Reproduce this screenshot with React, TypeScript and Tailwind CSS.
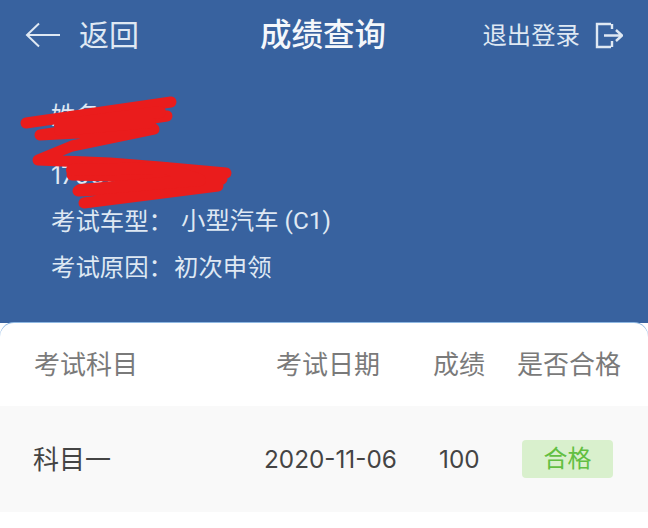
export default function App() {
  return (
    <div className="relative w-[648px] h-[528px] overflow-hidden bg-white font-['Inter','Noto_Sans_CJK_SC',sans-serif]">
      <div className="h-[323px] bg-[#38629f] text-[#dfe8f3]">
        <header className="h-[70px] flex items-center justify-between pl-[25px] pr-[25px]">
          <div className="w-[200px] flex items-center gap-[19px]">
            <svg width="35" height="26" viewBox="0 0 35 26" fill="none" stroke="#dfe8f3" strokeWidth="2">
              <path d="M35 13H2M14 1.5 2 13l12 11.5" />
            </svg>
            <span className="text-[30px] leading-[40px]">返回</span>
          </div>
          <h1 className="text-[31.5px] leading-[40px] font-medium text-[#f4f7fb] -translate-x-px">成绩查询</h1>
          <div className="w-[200px] flex items-center justify-end gap-[15px]">
            <span className="text-[24.4px] leading-[36px]">退出登录</span>
            <svg width="28" height="27" viewBox="0 0 28 27" fill="none" stroke="#dfe8f3" strokeWidth="2.4">
              <path d="M16 2H2v23h14M17 7v-5M17 25v-6M9 13.5h17M21 8l6 5.5-6 5.5" />
            </svg>
          </div>
        </header>
        <div className="pl-[51px] pt-[27px] text-[24.4px] flex flex-col">
          <div className="h-[36px] leading-[36px]">姓名：</div>
          <div className="h-[36px] mt-[24px] leading-[36px]">170000000</div>
          <div className="h-[36px] mt-[10px] leading-[36px] flex">
            <span className="w-[130px]">考试车型：</span>
            <span className="font-['Roboto','Noto_Sans_CJK_SC',sans-serif]">小型汽车 (C1)</span>
          </div>
          <div className="h-[36px] mt-[10px] leading-[36px] flex">
            <span className="w-[123px]">考试原因：</span>
            <span>初次申领</span>
          </div>
        </div>
      </div>

      <svg className="absolute left-0 top-0 pointer-events-none" width="648" height="528" fill="none" stroke="#ea1c1c" strokeWidth="11" strokeLinecap="round" strokeLinejoin="round">
        <path d="M171 102 26 123M167 116 40 135 154 129 72 146 38 160 110 163 160 167 226 173M72 175 222 179M78 191 218 185 84 203 218 186" />
        <path d="M60 125 160 112M60 130 150 122M72 170 165 168 200 180 80 190" strokeWidth="12" />
      </svg>

      <div className="absolute left-0 right-0 top-[323px] bottom-0 bg-white rounded-t-[14px] shadow-[0_-1px_0_#8fb8e2]">
        <div className="h-[83px] pl-[34px] pr-[27px] flex items-center text-[26px] text-[#7a7a7a]">
          <span className="w-[242px]">考试科目</span>
          <span className="w-[157px]">考试日期</span>
          <span className="w-[84px]">成绩</span>
          <span>是否合格</span>
        </div>
        <div className="h-[106px] bg-[#f9f9f9] pl-[33px] flex items-center text-[26px] text-[#444444]">
          <span className="w-[231px]">科目一</span>
          <span className="w-[175px] text-[24.3px]">2020-11-06</span>
          <span className="w-[83px] text-[24.3px]">100</span>
          <span className="w-[91px] h-[38px] bg-[#d9f0cd] rounded-[4px] text-[#62bf42] text-[24px] leading-[38px] text-center">合格</span>
        </div>
      </div>
    </div>
  );
}
